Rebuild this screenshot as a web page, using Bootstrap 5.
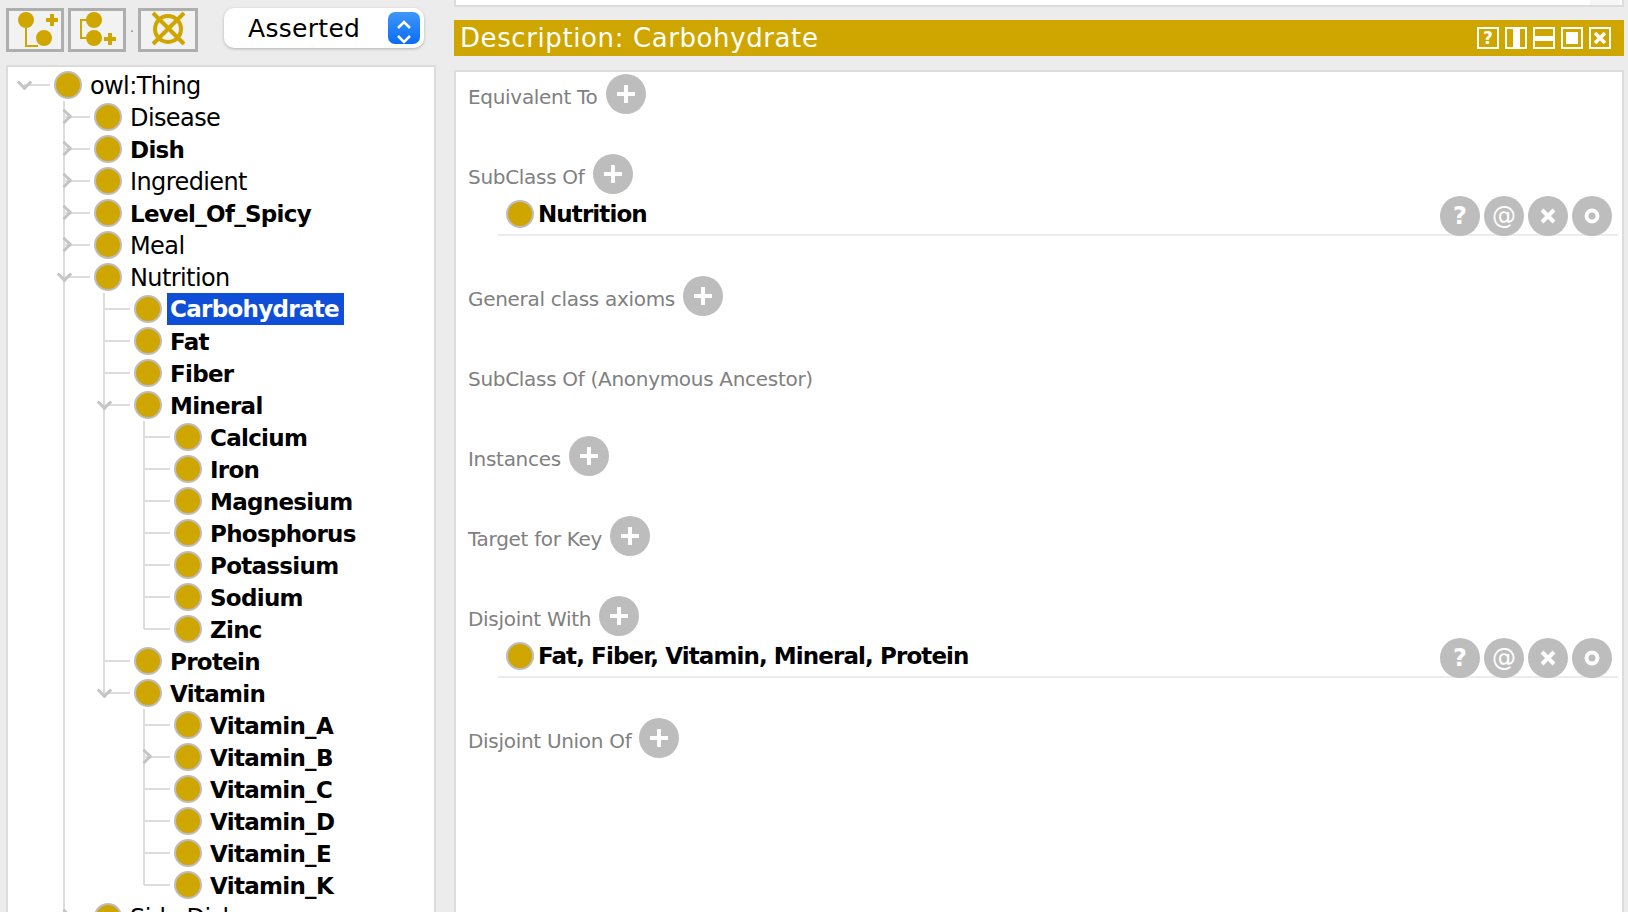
<!DOCTYPE html>
<html lang="en">
<head>
    <meta charset="UTF-8">
    <meta name="viewport" content="width=device-width, initial-scale=1.0">
    <link href="https://cdn.jsdelivr.net/npm/bootstrap@5.3.0/dist/css/bootstrap.min.css" rel="stylesheet">
    <title>Carbohydrate</title>
    <style>
        html, body { height: 912px; overflow: hidden; }
        body { background: #ececec; font-family: "DejaVu Sans", sans-serif; color: #000; }
        .left-col { width: 436px; padding-left: 6px; height: 912px; }
        .right-col { width: 1170px; margin-left: 18px; height: 912px; }

        .tool-row { height: 65px; padding-top: 8px; }
        .tool-btn { width: 58px; height: 44px; padding: 0; border: 3px solid #aeaeae; border-radius: 0; background: #f2f2f2; }
        .tool-btn.wide-btn { width: 60px; }
        .tool-btn svg { display: block; margin: -3px; }
        .tool-dot { width: 12px; text-align: center; font-size: 12px; line-height: 40px; color: #777; }
        .view-select { width: 200px; height: 40px; margin-left: 26px; background: #fff; border-radius: 10px; box-shadow: 0 1px 3px rgba(0,0,0,.25); padding: 0 4px 0 24px; font-size: 25px; letter-spacing: .3px; }
        .view-select > span:first-child { padding-top: 2px; }
        .stepper { width: 32px; height: 32px; border-radius: 7px; background: linear-gradient(#3f97f8, #0a6cf5); }

        .tree-pane { height: 870px; overflow: hidden; background: #fff; border: 2px solid #dcdcdc; padding-top: 2px; }
        .tree-list, .tree-list ul { list-style: none; margin: 0; padding: 0 0 0 40px; }
        .tree-list { padding-left: 16px; }
        .tree-list li { position: relative; }
        .tree-list ul li::before { content: ""; position: absolute; left: -1px; top: 0; bottom: 0; width: 2px; background: #dcdcdc; }
        .tree-list ul li:last-child::before { bottom: auto; height: 16px; }
        .tree-list li::after { content: ""; position: absolute; left: 0; top: 15px; width: 26px; height: 2px; background: #dcdcdc; }
        .tree-row { height: 32px; padding-left: 30px; font-size: 24px; line-height: 32px; letter-spacing: -.6px; white-space: nowrap; }
        .tree-row b { font-weight: 700; font-size: 23px; letter-spacing: -.7px; }
        .cls-dot { flex: none; display: block; width: 28px; height: 28px; border-radius: 50%; background: #cfa600; border: 2px solid #bdbdbd; }
        .tree-name { margin-left: 8px; margin-top: 2px; }
        .tree-sel { margin-left: 5px; padding: 1px 5px 0 3px; line-height: 31px; background: #0f4fd8; color: #fff; }
        .tw-open, .tw-shut { position: absolute; z-index: 1; border: solid #c4c4c4; border-width: 0 3px 3px 0; }
        .tw-open { width: 11px; height: 11px; left: -5px; top: 8px; transform: rotate(45deg); }
        .tw-shut { width: 11px; height: 11px; left: -5px; top: 10px; transform: rotate(-45deg); }

        .top-strip { height: 7px; background: #fff; border: 2px solid #dcdcdc; border-top: 0; padding-right: 2px; }
        .top-strip span { width: 30px; background: #f6f6f6; }
        .desc-head { height: 36px; margin-top: 13px; padding: 0 13px 0 6px; background: #cfa600; color: #fff; font-size: 26px; line-height: 36px; letter-spacing: .6px; }
        .head-icons { gap: 6px; }
        .head-icons svg { display: block; }
        .head-icons text { font-family: "DejaVu Sans", sans-serif; font-size: 17px; font-weight: 700; fill: #fff; letter-spacing: 0; }
        .desc-pane { height: 860px; margin-top: 14px; background: #fff; border: 2px solid #dcdcdc; padding: 2px 2px 0 12px; }
        .ax-head { height: 40px; margin-bottom: 40px; gap: 8px; }
        .ax-head.has-row { margin-bottom: 0; }
        .ax-label { color: #808080; font-size: 20px; padding-top: 5px; letter-spacing: -.3px; }
        .round-btn { flex: none; display: flex; align-items: center; justify-content: center; width: 40px; height: 40px; border-radius: 50%; background: #bdbdbd; color: #fff; font-size: 24px; font-weight: 700; }
        .round-btn.at { font-weight: 400; }
        .ax-row { height: 42px; margin: 0 2px 40px 30px; padding-left: 8px; border-bottom: 2px solid #ececec; font-size: 23px; letter-spacing: -.9px; }
        .ax-row .cls-dot { margin-right: 4px; }
        .row-btns { gap: 4px; margin-right: 6px; margin-top: 4px; }
        .row-btns .round-btn { letter-spacing: 0; }
    </style>
</head>
<body>
    <div class="d-flex">
        <div class="left-col">
            <div class="tool-row d-flex align-items-start">
                <button type="button" class="tool-btn">
                    <svg width="58" height="44" viewBox="0 0 58 44">
                        <path d="M20 20V38H32" fill="none" stroke="#cfa600" stroke-width="2"/>
                        <circle cx="20" cy="12" r="8" fill="#cfa600"/><circle cx="38" cy="30" r="8" fill="#cfa600"/>
                        <path d="M40 12H52M46 6V18" stroke="#cfa600" stroke-width="4"/>
                    </svg>
                </button>
                <button type="button" class="tool-btn ms-1">
                    <svg width="58" height="44" viewBox="0 0 58 44">
                        <path d="M20 12H13V30H19" fill="none" stroke="#cfa600" stroke-width="2"/>
                        <circle cx="26" cy="12" r="8" fill="#cfa600"/><circle cx="26" cy="30" r="8" fill="#cfa600"/>
                        <path d="M36 31H48M42 25V37" stroke="#cfa600" stroke-width="4"/>
                    </svg>
                </button>
                <div class="tool-dot">.</div>
                <button type="button" class="tool-btn wide-btn">
                    <svg width="60" height="44" viewBox="0 0 60 44">
                        <circle cx="30" cy="21" r="13" fill="none" stroke="#cfa600" stroke-width="4"/>
                        <path d="M15 5L46 36M46 5L15 36" stroke="#cfa600" stroke-width="4"/>
                    </svg>
                </button>
                <div class="view-select d-flex align-items-center justify-content-between">
                    <span>Asserted</span>
                    <span class="stepper d-block">
                        <svg width="32" height="32" viewBox="0 0 32 32"><path d="M10 12L16 6L22 12M10 20L16 26L22 20" fill="none" stroke="#fff" stroke-width="2.5"/></svg>
                    </span>
                </div>
            </div>
            <div class="tree-pane">
                <ul class="tree-list">
                    <li><span class="tw-open"></span><div class="tree-row d-flex align-items-center"><span class="cls-dot"></span><span class="tree-name">owl:Thing</span></div>
                        <ul>
                            <li><span class="tw-shut"></span><div class="tree-row d-flex align-items-center"><span class="cls-dot"></span><span class="tree-name">Disease</span></div></li>
                            <li><span class="tw-shut"></span><div class="tree-row d-flex align-items-center"><span class="cls-dot"></span><b class="tree-name">Dish</b></div></li>
                            <li><span class="tw-shut"></span><div class="tree-row d-flex align-items-center"><span class="cls-dot"></span><span class="tree-name">Ingredient</span></div></li>
                            <li><span class="tw-shut"></span><div class="tree-row d-flex align-items-center"><span class="cls-dot"></span><b class="tree-name">Level_Of_Spicy</b></div></li>
                            <li><span class="tw-shut"></span><div class="tree-row d-flex align-items-center"><span class="cls-dot"></span><span class="tree-name">Meal</span></div></li>
                            <li><span class="tw-open"></span><div class="tree-row d-flex align-items-center"><span class="cls-dot"></span><span class="tree-name">Nutrition</span></div>
                                <ul>
                                    <li><div class="tree-row d-flex align-items-center"><span class="cls-dot"></span><b class="tree-sel">Carbohydrate</b></div></li>
                                    <li><div class="tree-row d-flex align-items-center"><span class="cls-dot"></span><b class="tree-name">Fat</b></div></li>
                                    <li><div class="tree-row d-flex align-items-center"><span class="cls-dot"></span><b class="tree-name">Fiber</b></div></li>
                                    <li><span class="tw-open"></span><div class="tree-row d-flex align-items-center"><span class="cls-dot"></span><b class="tree-name">Mineral</b></div>
                                        <ul>
                                            <li><div class="tree-row d-flex align-items-center"><span class="cls-dot"></span><b class="tree-name">Calcium</b></div></li>
                                            <li><div class="tree-row d-flex align-items-center"><span class="cls-dot"></span><b class="tree-name">Iron</b></div></li>
                                            <li><div class="tree-row d-flex align-items-center"><span class="cls-dot"></span><b class="tree-name">Magnesium</b></div></li>
                                            <li><div class="tree-row d-flex align-items-center"><span class="cls-dot"></span><b class="tree-name">Phosphorus</b></div></li>
                                            <li><div class="tree-row d-flex align-items-center"><span class="cls-dot"></span><b class="tree-name">Potassium</b></div></li>
                                            <li><div class="tree-row d-flex align-items-center"><span class="cls-dot"></span><b class="tree-name">Sodium</b></div></li>
                                            <li><div class="tree-row d-flex align-items-center"><span class="cls-dot"></span><b class="tree-name">Zinc</b></div></li>
                                        </ul>
                                    </li>
                                    <li><div class="tree-row d-flex align-items-center"><span class="cls-dot"></span><b class="tree-name">Protein</b></div></li>
                                    <li><span class="tw-open"></span><div class="tree-row d-flex align-items-center"><span class="cls-dot"></span><b class="tree-name">Vitamin</b></div>
                                        <ul>
                                            <li><div class="tree-row d-flex align-items-center"><span class="cls-dot"></span><b class="tree-name">Vitamin_A</b></div></li>
                                            <li><span class="tw-shut"></span><div class="tree-row d-flex align-items-center"><span class="cls-dot"></span><b class="tree-name">Vitamin_B</b></div></li>
                                            <li><div class="tree-row d-flex align-items-center"><span class="cls-dot"></span><b class="tree-name">Vitamin_C</b></div></li>
                                            <li><div class="tree-row d-flex align-items-center"><span class="cls-dot"></span><b class="tree-name">Vitamin_D</b></div></li>
                                            <li><div class="tree-row d-flex align-items-center"><span class="cls-dot"></span><b class="tree-name">Vitamin_E</b></div></li>
                                            <li><div class="tree-row d-flex align-items-center"><span class="cls-dot"></span><b class="tree-name">Vitamin_K</b></div></li>
                                        </ul>
                                    </li>
                                </ul>
                            </li>
                            <li><span class="tw-shut"></span><div class="tree-row d-flex align-items-center"><span class="cls-dot"></span><span class="tree-name">Side Dish</span></div></li>
                        </ul>
                    </li>
                </ul>
            </div>
        </div>
        <div class="right-col">
            <div class="top-strip d-flex justify-content-end"><span class="d-block"></span></div>
            <div class="desc-head d-flex align-items-center justify-content-between">
                <span>Description: Carbohydrate</span>
                <div class="head-icons d-flex">
                    <svg width="22" height="22" viewBox="0 0 22 22"><rect x="1" y="1" width="20" height="20" fill="none" stroke="#fff" stroke-width="2"/><text x="11" y="17" text-anchor="middle">?</text></svg>
                    <svg width="22" height="22" viewBox="0 0 22 22"><rect x="1" y="1" width="20" height="20" fill="none" stroke="#fff" stroke-width="2"/><rect x="8" y="1" width="7" height="20" fill="#fff"/></svg>
                    <svg width="22" height="22" viewBox="0 0 22 22"><rect x="1" y="1" width="20" height="20" fill="none" stroke="#fff" stroke-width="2"/><rect x="1" y="9" width="20" height="5" fill="#fff"/></svg>
                    <svg width="22" height="22" viewBox="0 0 22 22"><rect x="1" y="1" width="20" height="20" fill="none" stroke="#fff" stroke-width="2"/><rect x="5" y="5" width="12" height="12" fill="#fff"/></svg>
                    <svg width="22" height="22" viewBox="0 0 22 22"><rect x="1" y="1" width="20" height="20" fill="none" stroke="#fff" stroke-width="2"/><path d="M6 6L16 16M16 6L6 16" stroke="#fff" stroke-width="3.5"/></svg>
                </div>
            </div>
            <div class="desc-pane">
                <div class="ax-head d-flex align-items-center"><span class="ax-label">Equivalent To</span><span class="round-btn"><svg width="22" height="22" viewBox="0 0 22 22"><path d="M11 2V20M2 11H20" stroke="#fff" stroke-width="4"/></svg></span></div>

                <div class="ax-head has-row d-flex align-items-center"><span class="ax-label">SubClass Of</span><span class="round-btn"><svg width="22" height="22" viewBox="0 0 22 22"><path d="M11 2V20M2 11H20" stroke="#fff" stroke-width="4"/></svg></span></div>
                <div class="ax-row d-flex align-items-center justify-content-between">
                    <div class="d-flex align-items-center"><span class="cls-dot"></span><b>Nutrition</b></div>
                    <div class="row-btns d-flex">
                        <span class="round-btn">?</span><span class="round-btn at">@</span>
                        <span class="round-btn"><svg width="20" height="20" viewBox="0 0 20 20"><path d="M4 4L16 16M16 4L4 16" stroke="#fff" stroke-width="4"/></svg></span>
                        <span class="round-btn"><svg width="20" height="20" viewBox="0 0 20 20"><circle cx="10" cy="10" r="5.5" fill="none" stroke="#fff" stroke-width="4"/></svg></span>
                    </div>
                </div>

                <div class="ax-head d-flex align-items-center"><span class="ax-label">General class axioms</span><span class="round-btn"><svg width="22" height="22" viewBox="0 0 22 22"><path d="M11 2V20M2 11H20" stroke="#fff" stroke-width="4"/></svg></span></div>
                <div class="ax-head d-flex align-items-center"><span class="ax-label">SubClass Of (Anonymous Ancestor)</span></div>
                <div class="ax-head d-flex align-items-center"><span class="ax-label">Instances</span><span class="round-btn"><svg width="22" height="22" viewBox="0 0 22 22"><path d="M11 2V20M2 11H20" stroke="#fff" stroke-width="4"/></svg></span></div>
                <div class="ax-head d-flex align-items-center"><span class="ax-label">Target for Key</span><span class="round-btn"><svg width="22" height="22" viewBox="0 0 22 22"><path d="M11 2V20M2 11H20" stroke="#fff" stroke-width="4"/></svg></span></div>

                <div class="ax-head has-row d-flex align-items-center"><span class="ax-label">Disjoint With</span><span class="round-btn"><svg width="22" height="22" viewBox="0 0 22 22"><path d="M11 2V20M2 11H20" stroke="#fff" stroke-width="4"/></svg></span></div>
                <div class="ax-row d-flex align-items-center justify-content-between">
                    <div class="d-flex align-items-center"><span class="cls-dot"></span><b>Fat, Fiber, Vitamin, Mineral, Protein</b></div>
                    <div class="row-btns d-flex">
                        <span class="round-btn">?</span><span class="round-btn at">@</span>
                        <span class="round-btn"><svg width="20" height="20" viewBox="0 0 20 20"><path d="M4 4L16 16M16 4L4 16" stroke="#fff" stroke-width="4"/></svg></span>
                        <span class="round-btn"><svg width="20" height="20" viewBox="0 0 20 20"><circle cx="10" cy="10" r="5.5" fill="none" stroke="#fff" stroke-width="4"/></svg></span>
                    </div>
                </div>

                <div class="ax-head d-flex align-items-center"><span class="ax-label">Disjoint Union Of</span><span class="round-btn"><svg width="22" height="22" viewBox="0 0 22 22"><path d="M11 2V20M2 11H20" stroke="#fff" stroke-width="4"/></svg></span></div>
            </div>
        </div>
    </div>
    <script src="https://cdn.jsdelivr.net/npm/bootstrap@5.3.0/dist/js/bootstrap.bundle.min.js"></script>
</body>
</html>
